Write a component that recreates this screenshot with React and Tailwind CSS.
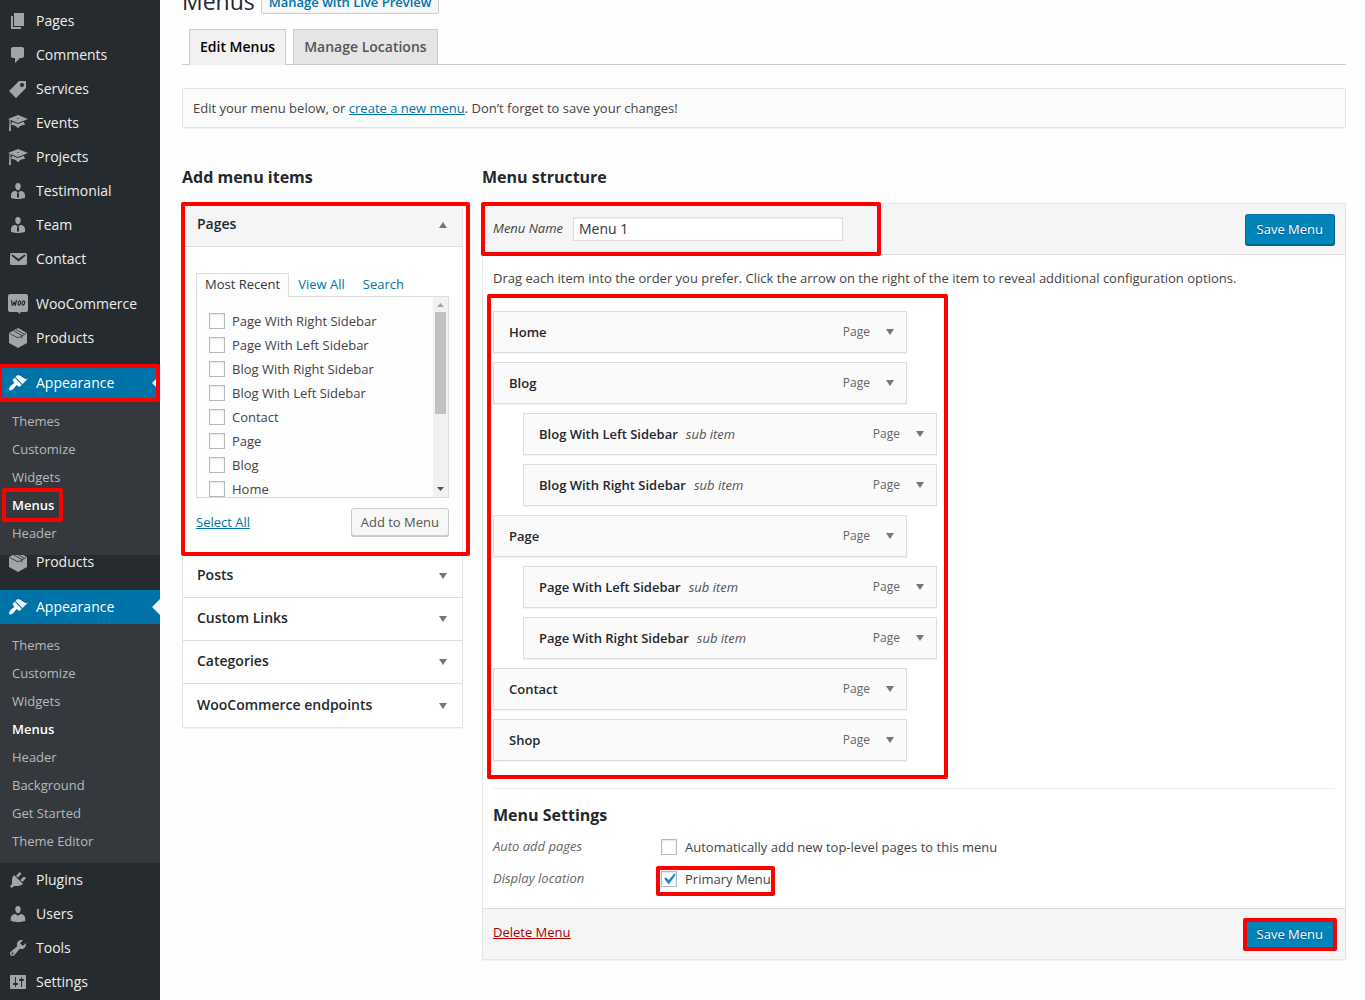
import React from 'react';

const icons = {
    page: 'M6 15V2h10v13H6zm-1 1h8v2H3V5h2v11z',
    comments: 'M5 2h9c1.1 0 2 .9 2 2v7c0 1.1-.9 2-2 2h-2l-5 5v-5H5c-1.1 0-2-.9-2-2V4c0-1.1.9-2 2-2z',
    tag: 'M11 2h7v7L8 19l-7-7zm3 6c1.1 0 2-.9 2-2s-.9-2-2-2-2 .9-2 2 .9 2 2 2z',
    learn: 'M10 10L2.54 7.02 3 18H1l.48-11.41L0 6l10-4 10 4zm0-5c-.55 0-1 .22-1 .5s.45.5 1 .5 1-.22 1-.5-.45-.5-1-.5zm0 6l5.57-2.23c.71.94 1.2 2.07 1.36 3.3-.3-.04-.61-.07-.93-.07-2.55 0-4.78 1.37-6 3.41C8.78 13.37 6.55 12 4 12c-.32 0-.63.03-.93.07.16-1.23.65-2.36 1.36-3.3z',
    businessman: 'M7.3 6l-.03-.19c-.04-.37-.05-.73-.03-1.08.02-.36.1-.71.25-1.04.14-.32.31-.61.52-.86s.49-.46.83-.6c.34-.15.72-.23 1.13-.23.69 0 1.26.2 1.71.59s.76.87.91 1.44.18 1.16.09 1.78l-.03.19c-.01.09-.05.25-.11.48-.05.24-.12.47-.2.69-.08.21-.19.45-.34.72-.14.27-.3.49-.47.69-.18.19-.4.34-.67.48-.27.13-.55.19-.86.19s-.59-.06-.87-.19c-.26-.13-.49-.29-.67-.5-.18-.2-.34-.42-.49-.66-.15-.25-.26-.49-.34-.73-.09-.25-.16-.47-.21-.67-.06-.21-.1-.37-.12-.5zm9.2 6.24c.41.7.5 1.41.5 2.14v2.49c0 .03-.12.08-.29.13-.18.04-.42.13-.97.27-.55.12-1.1.24-1.65.34s-1.19.19-1.95.27c-.75.08-1.46.12-2.13.12-.68 0-1.39-.04-2.14-.12-.75-.07-1.4-.17-1.98-.27-.58-.11-1.08-.23-1.56-.34-.49-.11-.8-.21-1.06-.29L3 16.87v-2.49c0-.75.07-1.46.46-2.15s.81-1.25 1.5-1.68C5.66 10.12 7.19 10 8 10l1.67 1.67L9 13v3l1.02 1.08L11 16v-3l-.68-1.33L11.97 10c.77 0 2.2.07 2.9.52.71.45 1.21 1.02 1.63 1.72z',
    email: 'M3.87 4h13.25C18.37 4 19 4.59 19 5.79v8.42c0 1.19-.63 1.79-1.88 1.79H3.87c-1.25 0-1.88-.6-1.88-1.79V5.79c0-1.2.63-1.79 1.88-1.79zm6.62 8.6l6.74-5.53c.24-.2.43-.66.13-1.07-.29-.41-.82-.42-1.17-.17l-5.7 3.86L4.8 5.83c-.35-.25-.88-.24-1.17.17-.3.41-.11.87.13 1.07z',
    appearance: 'M14.48 11.06L7.41 3.99l1.5-1.5c.5-.56 2.3-.47 3.51.32 1.21.8 1.43 1.28 2.91 2.1 1.18.64 2.45 1.26 4.45.85zm-.71.71L6.7 4.7 4.93 6.47c-.39.39-.39 1.02 0 1.41l1.06 1.06c.39.39.39 1.03 0 1.42-.6.6-1.43 1.11-2.21 1.69-.35.26-.7.53-1.01.84C1.43 14.23.4 16.08 1.4 17.07c.99 1 2.84-.03 4.18-1.36.31-.31.58-.66.85-1.02.57-.78 1.08-1.61 1.69-2.21.39-.39 1.02-.39 1.41 0l1.06 1.06c.39.39 1.02.39 1.41 0z',
    plugins: 'M13.11 4.36L9.87 7.6 8 5.73l3.24-3.24c.35-.34 1.05-.2 1.56.32.52.51.66 1.21.31 1.55zm-8 1.77l.91-1.12 9.01 9.01-1.19.84c-.71.71-2.63 1.16-3.82 1.16H6.14L4.9 17.26c-.59.59-1.54.59-2.12 0-.59-.58-.59-1.53 0-2.12l1.24-1.24v-3.88c0-1.13.4-3.19 1.09-3.89zm7.26 3.97l3.24-3.24c.34-.35 1.04-.21 1.55.31.52.51.66 1.21.31 1.55l-3.24 3.25z',
    users: 'M10 9.25c-2.27 0-2.73-3.44-2.73-3.44C7 4.02 7.82 2 9.97 2c2.16 0 2.98 2.02 2.71 3.81 0 0-.41 3.44-2.68 3.44zm0 2.57L12.72 10c2.39 0 4.52 2.33 4.52 4.53v2.49s-3.65 1.13-7.24 1.13c-3.65 0-7.24-1.13-7.24-1.13v-2.49c0-2.25 1.94-4.48 4.47-4.48z',
    tools: 'M16.68 9.77c-1.34 1.34-3.3 1.67-4.95.99l-5.41 6.52c-.99.99-2.59.99-3.58 0s-.99-2.59 0-3.57l6.52-5.42c-.68-1.65-.35-3.61.99-4.95 1.28-1.28 3.12-1.62 4.72-1.06l-2.89 2.89 2.82 2.82 2.86-2.87c.53 1.58.18 3.39-1.08 4.65zM3.81 16.21c.4.39 1.04.39 1.43 0 .4-.4.4-1.04 0-1.43-.39-.4-1.03-.4-1.43 0-.39.39-.39 1.03 0 1.43z',
    settings: 'M18 16V4c0-.55-.45-1-1-1H3c-.55 0-1 .45-1 1v12c0 .55.45 1 1 1h14c.55 0 1-.45 1-1zM8 11h1c.55 0 1 .45 1 1s-.45 1-1 1H8v1.5c0 .28-.22.5-.5.5s-.5-.22-.5-.5V13H6c-.55 0-1-.45-1-1s.45-1 1-1h1V5.5c0-.28.22-.5.5-.5s.5.22.5.5V11zm5-2h-1c-.55 0-1-.45-1-1s.45-1 1-1h1V5.5c0-.28.22-.5.5-.5s.5.22.5.5V7h1c.55 0 1 .45 1 1s-.45 1-1 1h-1v5.5c0 .28-.22.5-.5.5s-.5-.22-.5-.5V9z',
};

const topItems = [
    ['Pages', 'page'],
    ['Comments', 'comments'],
    ['Services', 'tag'],
    ['Events', 'learn'],
    ['Projects', 'learn'],
    ['Testimonial', 'businessman'],
    ['Team', 'businessman'],
    ['Contact', 'email'],
];

const bottomItems = [
    ['Plugins', 'plugins'],
    ['Users', 'users'],
    ['Tools', 'tools'],
    ['Settings', 'settings'],
];

const recentPages = [
    'Page With Right Sidebar',
    'Page With Left Sidebar',
    'Blog With Right Sidebar',
    'Blog With Left Sidebar',
    'Contact',
    'Page',
    'Blog',
    'Home',
];

const menuItems = [
    { title: 'Home' },
    { title: 'Blog' },
    { title: 'Blog With Left Sidebar', sub: true },
    { title: 'Blog With Right Sidebar', sub: true },
    { title: 'Page' },
    { title: 'Page With Left Sidebar', sub: true },
    { title: 'Page With Right Sidebar', sub: true },
    { title: 'Contact' },
    { title: 'Shop' },
];

function Icon({ name }) {
    if (name === 'woo') {
        return (
            <svg className="w-5 h-5 shrink-0" viewBox="0 0 20 20">
                <path fill="currentColor" d="M2 0h16a2 2 0 012 2v14a2 2 0 01-2 2h-5.500l-.5 2-2.500-2H2a2 2 0 01-2-2V2a2 2 0 012-2z" />
                <g fill="none" stroke="#262b2f" strokeWidth="1.200" strokeLinecap="round" strokeLinejoin="round">
                    <path d="M3.500 6.500l.8 5 2-3.500.9 3.500 1.300-5.200" />
                    <ellipse cx="11.300" cy="9" rx="1.200" ry="2.200" transform="rotate(12 11.300 9)" />
                    <ellipse cx="15.400" cy="9" rx="1.200" ry="2.200" transform="rotate(12 15.400 9)" />
                </g>
            </svg>
        );
    }
    if (name === 'box') {
        return (
            <svg className="w-5 h-5 shrink-0" viewBox="0 0 20 20">
                <path fill="currentColor" d="M10 0l9 5v10l-9 5-9-5V5z" />
                <g fill="none" stroke="#262b2f" strokeWidth="0.800">
                    <path d="M1.500 5.300L10 10l8.500-4.700M5.600 2.800l8.400 4.700v3M8 1.500l8.200 4.600" />
                </g>
            </svg>
        );
    }
    return (
        <svg className="w-5 h-5 shrink-0" viewBox="0 0 20 20" fill="currentColor">
            <path d={icons[name]} />
        </svg>
    );
}

// Red frame laid over the element that holds it
function Frame({ className }) {
    return <span className={`absolute z-10 border-4 border-[#ff0000] rounded-xs pointer-events-none ${className}`}></span>;
}

function NavItem({ label, icon }) {
    return (
        <a href="#" className="flex items-center gap-2 shrink-0 h-[34px] px-2 text-sm text-[#eee]">
            <span className="text-[#a0a5aa]"><Icon name={icon} /></span>
            {label}
        </a>
    );
}

function Appearance({ framed }) {
    return (
        <a href="#" className="relative flex items-center gap-2 h-[34px] px-2 text-sm text-white bg-[#0074a8]">
            <Icon name="appearance" />
            Appearance
            <span className="absolute right-0 top-[9px] border-8 border-l-0 border-transparent border-r-[#f1f1f1]"></span>
            {framed && <Frame className="-inset-y-[2px] -left-[2px] right-0" />}
        </a>
    );
}

function SubMenu({ items, framed }) {
    return (
        <ul className="bg-[#35393d] pt-[7px] pb-2 text-[13px] leading-7">
            {items.map((item) => (
                <li key={item} className="relative px-3">
                    <a href="#" className={item === 'Menus' ? 'font-semibold text-white' : 'text-[#b4b9be]'}>{item}</a>
                    {framed && item === 'Menus' && <Frame className="-inset-y-[3px] left-[2px] w-[61px]" />}
                </li>
            ))}
        </ul>
    );
}

function Arrow({ up }) {
    return (
        <svg className="w-2 h-[6px] text-[#72777c]" viewBox="0 0 8 6" fill="currentColor">
            <path d={up ? 'M4 0l4 6H0z' : 'M0 0h8L4 6z'} />
        </svg>
    );
}

function Checkbox({ id, checked }) {
    return (
        <span className="relative flex shrink-0">
            <input id={id} type="checkbox" defaultChecked={checked} className="peer appearance-none w-4 h-4 bg-white border border-[#b4b9be] shadow-[inset_0_1px_2px_rgba(0,0,0,0.1)]" />
            <svg className="absolute -top-[3px] -left-[3px] w-[22px] h-[22px] text-[#1e8cbe] opacity-0 peer-checked:opacity-100 pointer-events-none" viewBox="0 0 20 20" fill="currentColor">
                <path d="M14.83 4.89l1.34.94-5.81 8.38H9.02L5.78 9.670l1.340-1.250 2.570 2.400z" />
            </svg>
        </span>
    );
}

function SaveButton() {
    return (
        <button type="button" className="h-[31px] px-[11px] pt-px bg-[#0085ba] border border-[#006799] border-t-[#0073aa] rounded-[3px] shadow-[0_1px_0_#006799] text-[13px] text-white [text-shadow:0_-1px_1px_#006799,0_1px_1px_#006799]">Save Menu</button>
    );
}

function Sidebar() {
    return (
        <nav className="w-40 shrink-0 bg-[#262b2f] pt-1">
            {topItems.map(([text, icon]) => <NavItem key={text} label={text} icon={icon} />)}
            <div className="h-[11px]"></div>
            <NavItem label="WooCommerce" icon="woo" />
            <NavItem label="Products" icon="box" />
            <div className="h-[11px]"></div>
            <Appearance framed />
            <SubMenu framed items={['Themes', 'Customize', 'Widgets', 'Menus', 'Header']} />
            <div className="flex flex-col justify-end h-6 overflow-hidden">
                <NavItem label="Products" icon="box" />
            </div>
            <div className="h-[11px]"></div>
            <Appearance />
            <SubMenu items={['Themes', 'Customize', 'Widgets', 'Menus', 'Header', 'Background', 'Get Started', 'Theme Editor']} />
            {bottomItems.map(([text, icon]) => <NavItem key={text} label={text} icon={icon} />)}
        </nav>
    );
}

function AddItems() {
    return (
        <section className="w-[281px] shrink-0">
            <h2 className="text-base leading-6 font-bold text-[#23282d]">Add menu items</h2>
            <div className="mt-[14px] border border-[#e5e5e5] bg-white shadow-[0_1px_1px_rgba(0,0,0,0.04)]">
                <div className="relative">
                    <Frame className="-top-[2px] -bottom-px -left-[2px] -right-[8px]" />
                    <button type="button" className="flex items-center justify-between w-full h-[43px] pl-[14px] pr-[15px] bg-[#f5f5f5] border-b border-[#ddd] text-sm font-semibold text-[#23282d]">
                        <span className="pb-0.5">Pages</span>
                        <Arrow up />
                    </button>
                    <div className="px-[13px] pt-[26px] pb-[19px] text-[13px]">
                        <div className="flex leading-5">
                            <a href="#" className="relative z-1 -mb-px px-2 pb-[3px] border border-b-0 border-[#ddd] bg-[#fdfdfd] text-[#32373c]">Most Recent</a>
                            <a href="#" className="px-[9px] pt-px text-[#0073aa]">View All</a>
                            <a href="#" className="px-[9px] pt-px text-[#0073aa]">Search</a>
                        </div>
                        <div className="flex h-[202px] border border-[#ddd] bg-[#fdfdfd] overflow-hidden">
                            <ul className="flex-1 pl-3 pt-3">
                                {recentPages.map((page, i) => (
                                    <li key={page} className="flex items-center gap-[7px] h-6">
                                        <Checkbox id={`page-${i}`} />
                                        <label htmlFor={`page-${i}`} className="pt-0.5">{page}</label>
                                    </li>
                                ))}
                            </ul>
                            <div className="flex flex-col items-center w-[15px] bg-[#f1f1f1] py-[6px]">
                                <svg className="w-[7px] h-1" viewBox="0 0 7 4" fill="#a3a3a3"><path d="M3.500 0L7 4H0z" /></svg>
                                <span className="w-[11px] h-[102px] mt-[5px] bg-[#c1c1c1]"></span>
                                <svg className="w-[7px] h-1 mt-auto" viewBox="0 0 7 4" fill="#505050"><path d="M0 0h7L3.500 4z" /></svg>
                            </div>
                        </div>
                        <div className="flex items-center justify-between mt-[10px]">
                            <a href="#" className="pt-0.5 text-[#0073aa] underline">Select All</a>
                            <button type="button" className="h-7 px-[9px] pt-0.5 bg-[#f7f7f7] border border-[#ccc] rounded-[3px] shadow-[0_1px_0_#ccc] text-[#555]">Add to Menu</button>
                        </div>
                    </div>
                </div>
                {['Posts', 'Custom Links', 'Categories', 'WooCommerce endpoints'].map((name) => (
                    <button key={name} type="button" className="flex items-center justify-between w-full h-[43px] pl-[14px] pr-[15px] border-b border-[#ddd] last:border-b-0 text-sm font-semibold text-[#23282d]">
                        <span className="pb-0.5">{name}</span>
                        <Arrow />
                    </button>
                ))}
            </div>
        </section>
    );
}

function MenuStructure() {
    return (
        <section className="flex-1 min-w-0">
            <h2 className="text-base leading-6 font-bold text-[#23282d]">Menu structure</h2>
            <div className="mt-[14px] border border-[#e5e5e5] bg-white shadow-[0_1px_1px_rgba(0,0,0,0.04)]">
                <div className="relative flex items-center justify-between h-[51px] px-[10px] bg-[#f5f5f5] border-b border-[#ddd]">
                    <Frame className="-top-[2px] -bottom-[2px] -left-[2px] w-[400px]" />
                    <div className="flex items-center gap-[10px]">
                        <label htmlFor="menu-name" className="italic">Menu Name</label>
                        <input id="menu-name" type="text" defaultValue="Menu 1" className="w-[270px] h-6 px-[5px] pb-0.5 bg-white border border-[#ddd] shadow-[inset_0_1px_2px_rgba(0,0,0,0.07)] text-sm text-[#32373c]" />
                    </div>
                    <SaveButton />
                </div>

                <div className="px-[10px] py-[13px]">
                    <p className="leading-5">Drag each item into the order you prefer. Click the arrow on the right of the item to reveal additional configuration options.</p>

                    <div className="relative w-[444px] mt-[23px]">
                        <Frame className="-top-[17px] -bottom-[18px] -left-[6px] -right-[11px]" />
                        <ul className="flex flex-col gap-[9px]">
                            {menuItems.map((item) => (
                                <li key={item.title} className={item.sub ? 'pl-[30px]' : 'pr-[30px]'}>
                                    <div className="flex items-center h-[42px] pl-[15px] pr-3 bg-[#fafafa] border border-[#ddd] shadow-[0_1px_1px_rgba(0,0,0,0.04)]">
                                        <span className="pt-0.5 font-semibold text-[#23282d]">{item.title}</span>
                                        {item.sub && <span className="ml-2 pt-0.5 italic text-[#555]">sub item</span>}
                                        <span className="ml-auto mr-4 text-xs text-[#666]">Page</span>
                                        <Arrow />
                                    </div>
                                </li>
                            ))}
                        </ul>
                    </div>

                    <div className="mt-[27px] pt-[14px] border-t border-[#eee]">
                        <h3 className="text-base leading-6 font-bold text-[#23282d]">Menu Settings</h3>
                        <div className="flex items-center h-8 mt-1">
                            <span className="w-[168px] italic text-[#666]">Auto add pages</span>
                            <span className="flex items-center gap-2">
                                <Checkbox id="auto-add" />
                                <label htmlFor="auto-add" className="pt-0.5">Automatically add new top-level pages to this menu</label>
                            </span>
                        </div>
                        <div className="flex items-center h-8">
                            <span className="w-[168px] italic text-[#666]">Display location</span>
                            <span className="relative flex items-center gap-2">
                                <Frame className="-top-[2px] -bottom-[6px] -left-[5px] -right-1" />
                                <Checkbox id="primary" checked />
                                <label htmlFor="primary" className="pt-0.5">Primary Menu</label>
                            </span>
                        </div>
                    </div>
                </div>

                <div className="flex items-center justify-between h-[51px] px-[10px] bg-[#f5f5f5] border-t border-[#ddd]">
                    <a href="#" className="pb-0.5 text-[#a00] underline">Delete Menu</a>
                    <div className="relative flex">
                        <Frame className="-inset-x-[2px] -inset-y-px" />
                        <SaveButton />
                    </div>
                </div>
            </div>
        </section>
    );
}

function App() {
    return (
        <div className="flex min-h-screen bg-[#fefefe] font-['Open_Sans',sans-serif] text-[13px] text-[#444]">
            <Sidebar />
            <main className="flex-1 min-w-0 pl-[22px] pr-[19px]">
                <div className="flex items-end gap-[6px] h-[14px]">
                    <h1 className="text-[23px] leading-[26px] text-[#23282d]">Menus</h1>
                    <a href="#" className="px-[7px] bg-[#f7f7f7] border border-[#ccc] rounded-xs leading-[22px] font-semibold text-[#0073aa]">Manage with Live Preview</a>
                </div>

                <div className="flex gap-[7px] mt-[15px] pl-[7px] border-b border-[#ccc] text-sm leading-6 font-semibold">
                    <a href="#" className="-mb-px px-[10px] pt-[5px] pb-[6px] border border-b-0 border-[#ccc] bg-[#f1f1f1] text-black">Edit Menus</a>
                    <a href="#" className="px-[10px] py-[5px] border border-b-0 border-[#ccc] bg-[#e5e5e5] text-[#555]">Manage Locations</a>
                </div>

                <p className="mt-[23px] px-[10px] py-[9px] leading-5 border border-[#e5e5e5] bg-[#fbfbfb] shadow-[0_1px_1px_rgba(0,0,0,0.04)]">
                    Edit your menu below, or <a href="#" className="text-[#0073aa] underline">create a new menu</a>. Don’t forget to save your changes!
                </p>

                <div className="flex gap-[19px] mt-[37px]">
                    <AddItems />
                    <MenuStructure />
                </div>
            </main>
        </div>
    );
}

export default App;
